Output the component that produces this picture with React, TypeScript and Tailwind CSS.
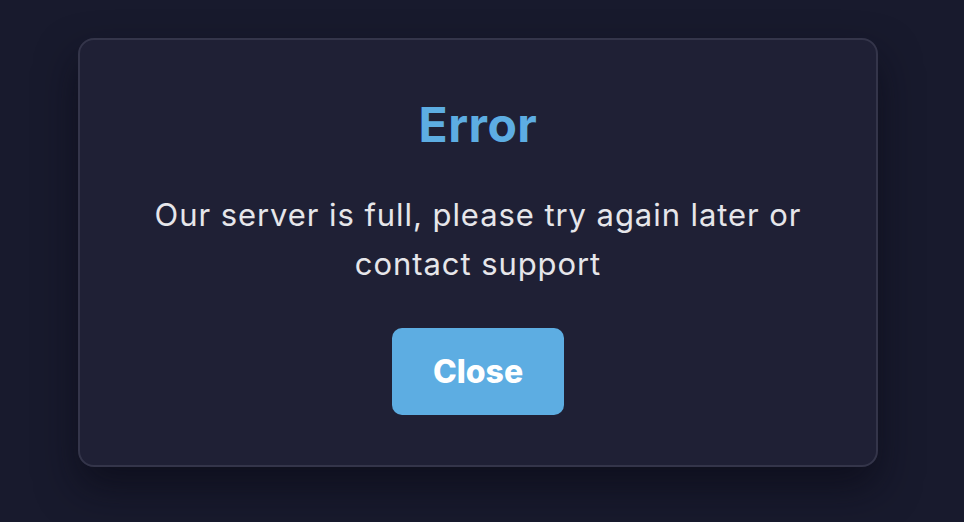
export default function App() {
  return (
    <div
      className="min-h-screen w-full bg-[#181a2d] flex justify-center pr-2 pt-[38px]"
      style={{ fontFamily: "Inter, 'Noto Sans', sans-serif" }}
    >
      <div className="w-[800px] h-[429px] rounded-2xl border-2 border-[#34354a] bg-[#1f2035] shadow-[0_20px_40px_rgba(8,9,20,0.6)] flex flex-col items-center pt-[55px]">
        <h1 className="text-[48px] leading-[60px] font-bold text-[#5dade2] tracking-[0.01em]">Error</h1>
        <p className="mt-[35px] w-[670px] text-center text-[31px] leading-[49px] tracking-[0.03em] text-[#e6e6ea]">
          Our server is full, please try again later or contact support
        </p>
        <button className="mt-[40px] w-[172px] h-[87px] rounded-[10px] bg-[#5dade2] text-white text-[32px] font-extrabold">
          Close
        </button>
      </div>
    </div>
  );
}
